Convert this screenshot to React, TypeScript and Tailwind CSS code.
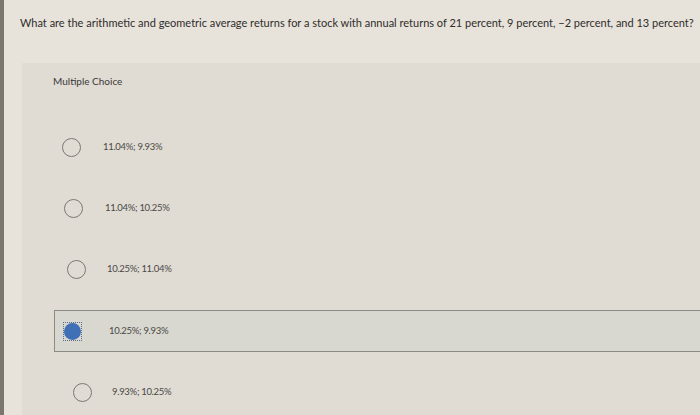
const options = [
  { label: "11.04%; 9.93%", pad: "pl-[8px]", gap: "gap-[22px]" },
  { label: "11.04%; 10.25%", pad: "pl-[10px]", gap: "gap-[22px]" },
  { label: "10.25%; 11.04%", pad: "pl-[13px]", gap: "gap-[21px]" },
  { label: "10.25%; 9.93%", pad: "pl-[8px]", gap: "gap-[27px]", selected: true },
  { label: "9.93%; 10.25%", pad: "pl-[19px]", gap: "gap-[20px]" },
];

export default function App() {
  return (
    <div
      className="w-[700px] h-[415px] flex overflow-hidden bg-[#e7e2da] text-[#2f2d2b]"
      style={{ fontFamily: "Lato, 'Open Sans', sans-serif" }}
    >
      {/* monitor bezel edge */}
      <div className="w-[4px] shrink-0 bg-[#7b766e]" />

      <div className="flex-1 flex flex-col">
        <p className="pl-[16px] pt-[15px] text-[11px] leading-[16px] whitespace-nowrap">
          What are the arithmetic and geometric average returns for a stock with annual returns of 21 percent, 9 percent, −2 percent, and 13 percent?
        </p>

        <div className="ml-[18px] mt-[32px] flex-1 bg-[#e0dcd4] pt-[12px]">
          <p className="pl-[31px] text-[10px] leading-[12px] text-[#3a3836]">Multiple Choice</p>

          <div className="mt-[40px] flex flex-col gap-[20px] pl-[32px]">
            {options.map((o) =>
              o.selected ? (
                <div
                  key={o.label}
                  className={`h-[42px] -mr-[4px] flex items-center ${o.pad} ${o.gap} bg-[#d8d8d1] border border-[#8d8b86]`}
                >
                  <div className="w-[19px] h-[19px] flex items-center justify-center border border-dotted border-[#5b6a90]">
                    <div className="w-[17px] h-[17px] rounded-full bg-[#3f6fb5]" />
                  </div>
                  <span className="text-[9.5px] tracking-[-0.3px] text-[#4a4845]">{o.label}</span>
                </div>
              ) : (
                <div key={o.label} className={`h-[41px] flex items-center ${o.pad} ${o.gap}`}>
                  <div className="w-[19px] h-[19px] rounded-full border-[1.5px] border-[#7a7874]" />
                  <span className="text-[9.5px] tracking-[-0.3px] text-[#4a4845]">{o.label}</span>
                </div>
              )
            )}
          </div>
        </div>
      </div>
    </div>
  );
}
